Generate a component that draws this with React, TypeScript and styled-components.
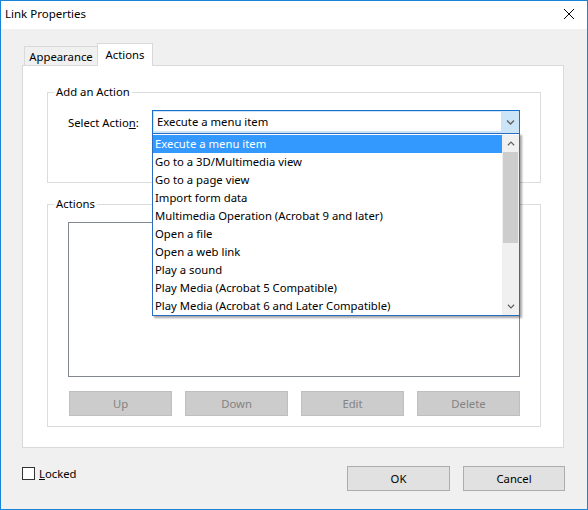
import React from 'react';
import styled, { createGlobalStyle } from 'styled-components';

const actionTypes = [
    'Execute a menu item',
    'Go to a 3D/Multimedia view',
    'Go to a page view',
    'Import form data',
    'Multimedia Operation (Acrobat 9 and later)',
    'Open a file',
    'Open a web link',
    'Play a sound',
    'Play Media (Acrobat 5 Compatible)',
    'Play Media (Acrobat 6 and Later Compatible)'
];

// Noto Sans is a bit wider than Segoe UI, so 9pt text is set slightly smaller
const uiFont = '11.3px';

const GlobalStyle = createGlobalStyle`
    * { box-sizing: border-box; }
    html, body { margin: 0; padding: 0; background: #f0f0f0; }
    body {
        font-family: "Noto Sans", "Open Sans", sans-serif;
        font-size: ${uiFont};
        color: #000;
    }
`;

const Window = styled.div`
    width: 588px;
    height: 510px;
    border: 1px solid #1883d7;
    background: #f0f0f0;
    display: flex;
    flex-direction: column;
    overflow: hidden;
`;

const TitleBar = styled.div`
    flex: none;
    height: 28px;
    background: #fff;
    display: flex;
    align-items: center;
    justify-content: space-between;
    padding: 0 0 3px 4px;
    font-size: 11.5px;
`;

const CloseButton = styled.div`
    width: 37px;
    height: 25px;
    display: flex;
    align-items: center;
    justify-content: center;
`;

const Body = styled.div`
    flex: none;
    display: flex;
    flex-direction: column;
    padding: 14px 23px 0 21px;
`;

const TabStrip = styled.div`
    display: flex;
    align-items: flex-end;
    height: 22px;
    padding-left: 2px;
    position: relative;
    z-index: 1;
`;

const Tab = styled.div<{ $active?: boolean }>`
    height: ${p => (p.$active ? 23 : 19)}px;
    margin-bottom: ${p => (p.$active ? -1 : 0)}px;
    width: ${p => (p.$active ? 56 : 73)}px;
    background: ${p => (p.$active ? '#fff' : '#f0f0f0')};
    border: 1px solid #d9d9d9;
    border-bottom: none;
    border-right: ${p => (p.$active ? '1px solid #d9d9d9' : 'none')};
    display: flex;
    align-items: center;
    justify-content: center;
    padding-bottom: ${p => (p.$active ? 2 : 0)}px;
`;

const Panel = styled.div`
    background: #fff;
    border: 1px solid #d9d9d9;
    padding: 18px 22px 20px 24px;
    display: flex;
    flex-direction: column;
    gap: 13px;
`;

const GroupBox = styled.fieldset`
    margin: 0;
    padding: 0;
    min-width: 0;
    border: 1px solid #dcdcdc;
`;

const Legend = styled.legend`
    margin-left: 6px;
    padding: 0 2px;
    line-height: 16px;
`;

const GroupBody = styled.div<{ $bottom: number }>`
    padding: 10px 20px ${p => p.$bottom}px 20px;
    display: flex;
    flex-direction: column;
`;

const FieldRow = styled.div`
    display: flex;
    align-items: center;
`;

const FieldLabel = styled.label`
    width: 84px;
`;

const ComboWrap = styled.div`
    position: relative;
    width: 368px;
    height: 24px;
`;

const ComboBox = styled.div`
    height: 100%;
    border: 1px solid #1a6fc9;
    background: #cce4f7;
    display: flex;
`;

const ComboText = styled.div`
    flex: 1;
    background: #fff;
    margin: 1px 0 2px 1px;
    padding-left: 3px;
    display: flex;
    align-items: center;
`;

const ComboArrow = styled.div`
    width: 18px;
    display: flex;
    align-items: center;
    justify-content: center;
`;

const DropList = styled.div`
    position: absolute;
    top: 23px;
    left: 0;
    width: 368px;
    height: 183px;
    border: 1px solid #2a6cc0;
    background: #fff;
    display: flex;
    padding-top: 1px;
    box-shadow: 2px 2px 2px rgba(0, 0, 0, 0.35);
    z-index: 5;
`;

const Items = styled.div`
    flex: 1;
    display: flex;
    flex-direction: column;
`;

const Item = styled.div<{ $selected?: boolean }>`
    height: 18px;
    line-height: 18px;
    padding-left: 2px;
    white-space: nowrap;
    background: ${p => (p.$selected ? '#3399ff' : 'transparent')};
    color: ${p => (p.$selected ? '#fff' : '#000')};
`;

const ScrollBar = styled.div`
    width: 17px;
    height: 180px;
    background: #f0f0f0;
    display: flex;
    flex-direction: column;
`;

const ScrollArrow = styled.div`
    height: 17px;
    flex: none;
    display: flex;
    align-items: center;
    justify-content: center;
`;

const ScrollTrack = styled.div`
    flex: 1;
    padding: 0 1px;
`;

const ScrollThumb = styled.div`
    height: 91px;
    background: #cdcdcd;
`;

const ListBox = styled.div`
    height: 155px;
    border: 1px solid #828790;
    background: #fff;
`;

const ButtonRow = styled.div`
    display: flex;
    gap: 13px;
    margin: 14px 0 0 1px;
`;

const Button = styled.button<{ $width?: number }>`
    width: ${p => p.$width ?? 103}px;
    height: 25px;
    margin: 0;
    padding: 0;
    font-family: inherit;
    font-size: ${uiFont};
    background: #e1e1e1;
    border: 1px solid #adadad;
    color: #000;

    &:disabled {
        background: #cccccc;
        border-color: #bfbfbf;
        color: #838383;
    }
`;

const Footer = styled.div`
    flex: 1;
    display: flex;
    align-items: flex-start;
    padding: 18px 22px 0 21px;
`;

const CheckLabel = styled.label`
    display: flex;
    align-items: center;
    gap: 4px;
    flex: 1;
`;

const CheckBox = styled.span`
    width: 13px;
    height: 13px;
    border: 1px solid #333;
    background: #fff;
`;

const DialogButtons = styled.div`
    display: flex;
    gap: 13px;
`;

const Chevron = ({ up, w = 9 }: { up?: boolean; w?: number }) => (
    <svg width={w} height={5} viewBox="0 0 9 5">
        <path
            d={up ? 'M1 4.5 L4.5 1 L8 4.5' : 'M1 0.5 L4.5 4 L8 0.5'}
            fill="none"
            stroke="#606060"
            strokeWidth={1.3}
        />
    </svg>
);

const App = () => {
    return (
        <Window>
            <GlobalStyle />
            <TitleBar>
                <span>Link Properties</span>
                <CloseButton>
                    <svg width="10" height="10" viewBox="0 0 10 10">
                        <path d="M0 0 L10 10 M10 0 L0 10" stroke="#000" strokeWidth={1} />
                    </svg>
                </CloseButton>
            </TitleBar>

            <Body>
                <TabStrip>
                    <Tab>Appearance</Tab>
                    <Tab $active>Actions</Tab>
                </TabStrip>

                <Panel>
                    <GroupBox>
                        <Legend>Add an Action</Legend>
                        <GroupBody $bottom={48}>
                            <FieldRow>
                                <FieldLabel>
                                    Select Actio<u>n</u>:
                                </FieldLabel>
                                <ComboWrap>
                                    <ComboBox>
                                        <ComboText>Execute a menu item</ComboText>
                                        <ComboArrow>
                                            <Chevron />
                                        </ComboArrow>
                                    </ComboBox>
                                    <DropList>
                                        <Items>
                                            {actionTypes.map((name, i) => (
                                                <Item key={name} $selected={i === 0}>
                                                    {name}
                                                </Item>
                                            ))}
                                        </Items>
                                        <ScrollBar>
                                            <ScrollArrow>
                                                <Chevron up w={8} />
                                            </ScrollArrow>
                                            <ScrollTrack>
                                                <ScrollThumb />
                                            </ScrollTrack>
                                            <ScrollArrow>
                                                <Chevron w={8} />
                                            </ScrollArrow>
                                        </ScrollBar>
                                    </DropList>
                                </ComboWrap>
                            </FieldRow>
                        </GroupBody>
                    </GroupBox>

                    <GroupBox>
                        <Legend>Actions</Legend>
                        <GroupBody $bottom={10}>
                            <ListBox />
                            <ButtonRow>
                                <Button disabled>Up</Button>
                                <Button disabled>Down</Button>
                                <Button disabled>Edit</Button>
                                <Button disabled>Delete</Button>
                            </ButtonRow>
                        </GroupBody>
                    </GroupBox>
                </Panel>
            </Body>

            <Footer>
                <CheckLabel>
                    <CheckBox />
                    <span>
                        <u>L</u>ocked
                    </span>
                </CheckLabel>
                <DialogButtons>
                    <Button>OK</Button>
                    <Button $width={102}>Cancel</Button>
                </DialogButtons>
            </Footer>
        </Window>
    );
};

export default App;
